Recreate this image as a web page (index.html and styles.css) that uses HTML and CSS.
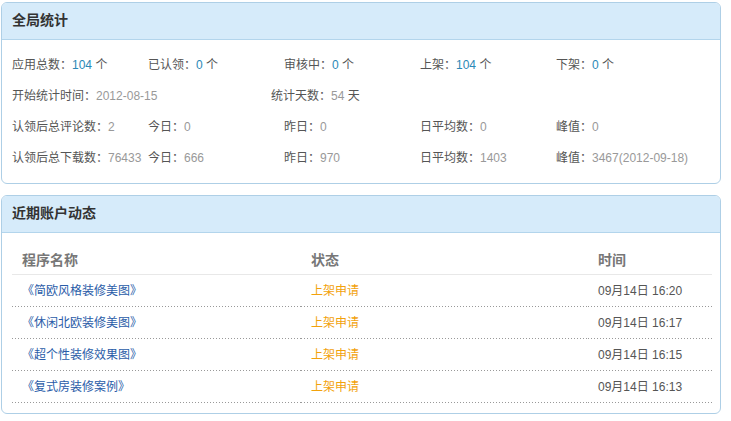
FILE: index.html
```html
<!DOCTYPE html>
<html lang="zh-CN">
<head>
    <meta charset="UTF-8">
    <title>统计</title>
    <link rel="stylesheet" href="styles.css">
</head>
<body>
    <div class="panel panel-stats">
        <div class="panel-head">全局统计</div>
        <div class="panel-body">
            <div class="stat-row">
                <div class="cell">应用总数：<span class="num">104</span> 个</div>
                <div class="cell">已认领：<span class="num">0</span> 个</div>
                <div class="cell">审核中：<span class="num">0</span> 个</div>
                <div class="cell">上架：<span class="num">104</span> 个</div>
                <div class="cell">下架：<span class="num">0</span> 个</div>
            </div>
            <div class="stat-row">
                <div class="cell cell-wide">开始统计时间：<span class="val">2012-08-15</span></div>
                <div class="cell">统计天数：<span class="val">54</span> 天</div>
            </div>
            <div class="stat-row">
                <div class="cell">认领后总评论数：<span class="val">2</span></div>
                <div class="cell">今日：<span class="val">0</span></div>
                <div class="cell">昨日：<span class="val">0</span></div>
                <div class="cell">日平均数：<span class="val">0</span></div>
                <div class="cell">峰值：<span class="val">0</span></div>
            </div>
            <div class="stat-row">
                <div class="cell">认领后总下载数：<span class="val">76433</span></div>
                <div class="cell">今日：<span class="val">666</span></div>
                <div class="cell">昨日：<span class="val">970</span></div>
                <div class="cell">日平均数：<span class="val">1403</span></div>
                <div class="cell">峰值：<span class="val">3467(2012-09-18)</span></div>
            </div>
        </div>
    </div>

    <div class="panel panel-recent">
        <div class="panel-head">近期账户动态</div>
        <div class="panel-body">
            <table class="recent">
                <thead>
                    <tr>
                        <th class="c-name">程序名称</th>
                        <th class="c-state">状态</th>
                        <th class="c-time">时间</th>
                    </tr>
                </thead>
                <tbody>
                    <tr>
                        <td><a href="#">《简欧风格装修美图》</a></td>
                        <td class="state">上架申请</td>
                        <td class="time">09月14日 16:20</td>
                    </tr>
                    <tr>
                        <td><a href="#">《休闲北欧装修美图》</a></td>
                        <td class="state">上架申请</td>
                        <td class="time">09月14日 16:17</td>
                    </tr>
                    <tr>
                        <td><a href="#">《超个性装修效果图》</a></td>
                        <td class="state">上架申请</td>
                        <td class="time">09月14日 16:15</td>
                    </tr>
                    <tr>
                        <td><a href="#">《复式房装修案例》</a></td>
                        <td class="state">上架申请</td>
                        <td class="time">09月14日 16:13</td>
                    </tr>
                </tbody>
            </table>
        </div>
    </div>
</body>
</html>
```

FILE: styles.css
```css
body {
    font-family: "Liberation Sans", "Noto Sans CJK SC", sans-serif;
    font-size: 12px;
    color: #555;
    margin: 0;
    padding: 2px 0 0 1px;
    background: #fff;
}
.panel {
    width: 720px;
    box-sizing: border-box;
    border: 1px solid #aecfe6;
    border-radius: 6px;
    overflow: hidden;
}
.panel-recent {
    margin-top: 11px;
}
.panel-head {
    height: 36px;
    line-height: 35px;
    background-color: #d6ebfa;
    border-bottom: 1px solid #b3d5ec;
    padding-left: 10px;
    font-size: 14px;
    font-weight: bold;
    color: #333;
}
.panel-body {
    padding: 10px 9px 9px 10px;
}
.panel-recent .panel-body {
    padding-bottom: 10px;
}
.stat-row {
    display: flex;
    height: 31px;
    line-height: 31px;
    white-space: nowrap;
}
.cell {
    width: 136px;
    flex-shrink: 0;
}
.cell-wide {
    width: 259px;
}
.num {
    color: #2b88b6;
}
.val {
    color: #999;
}
.recent {
    width: 700px;
    border-collapse: collapse;
    table-layout: fixed;
}
.recent th {
    height: 31px;
    text-align: left;
    font-size: 14px;
    font-weight: bold;
    color: #777;
    padding: 0 0 0 10px;
    border-bottom: 1px solid #e8e8e8;
}
.c-name {
    width: 279px;
}
.c-state {
    width: 277px;
}
.recent td {
    height: 30px;
    line-height: 30px;
    padding: 1px 0 1px 10px;
    background: linear-gradient(to right, #999 1px, transparent 1px) repeat-x left bottom / 3px 1px;
}
.recent a {
    color: #2a5ca8;
    text-decoration: none;
}
.state {
    color: #f2a20c;
}
.time {
    color: #555;
}
```
